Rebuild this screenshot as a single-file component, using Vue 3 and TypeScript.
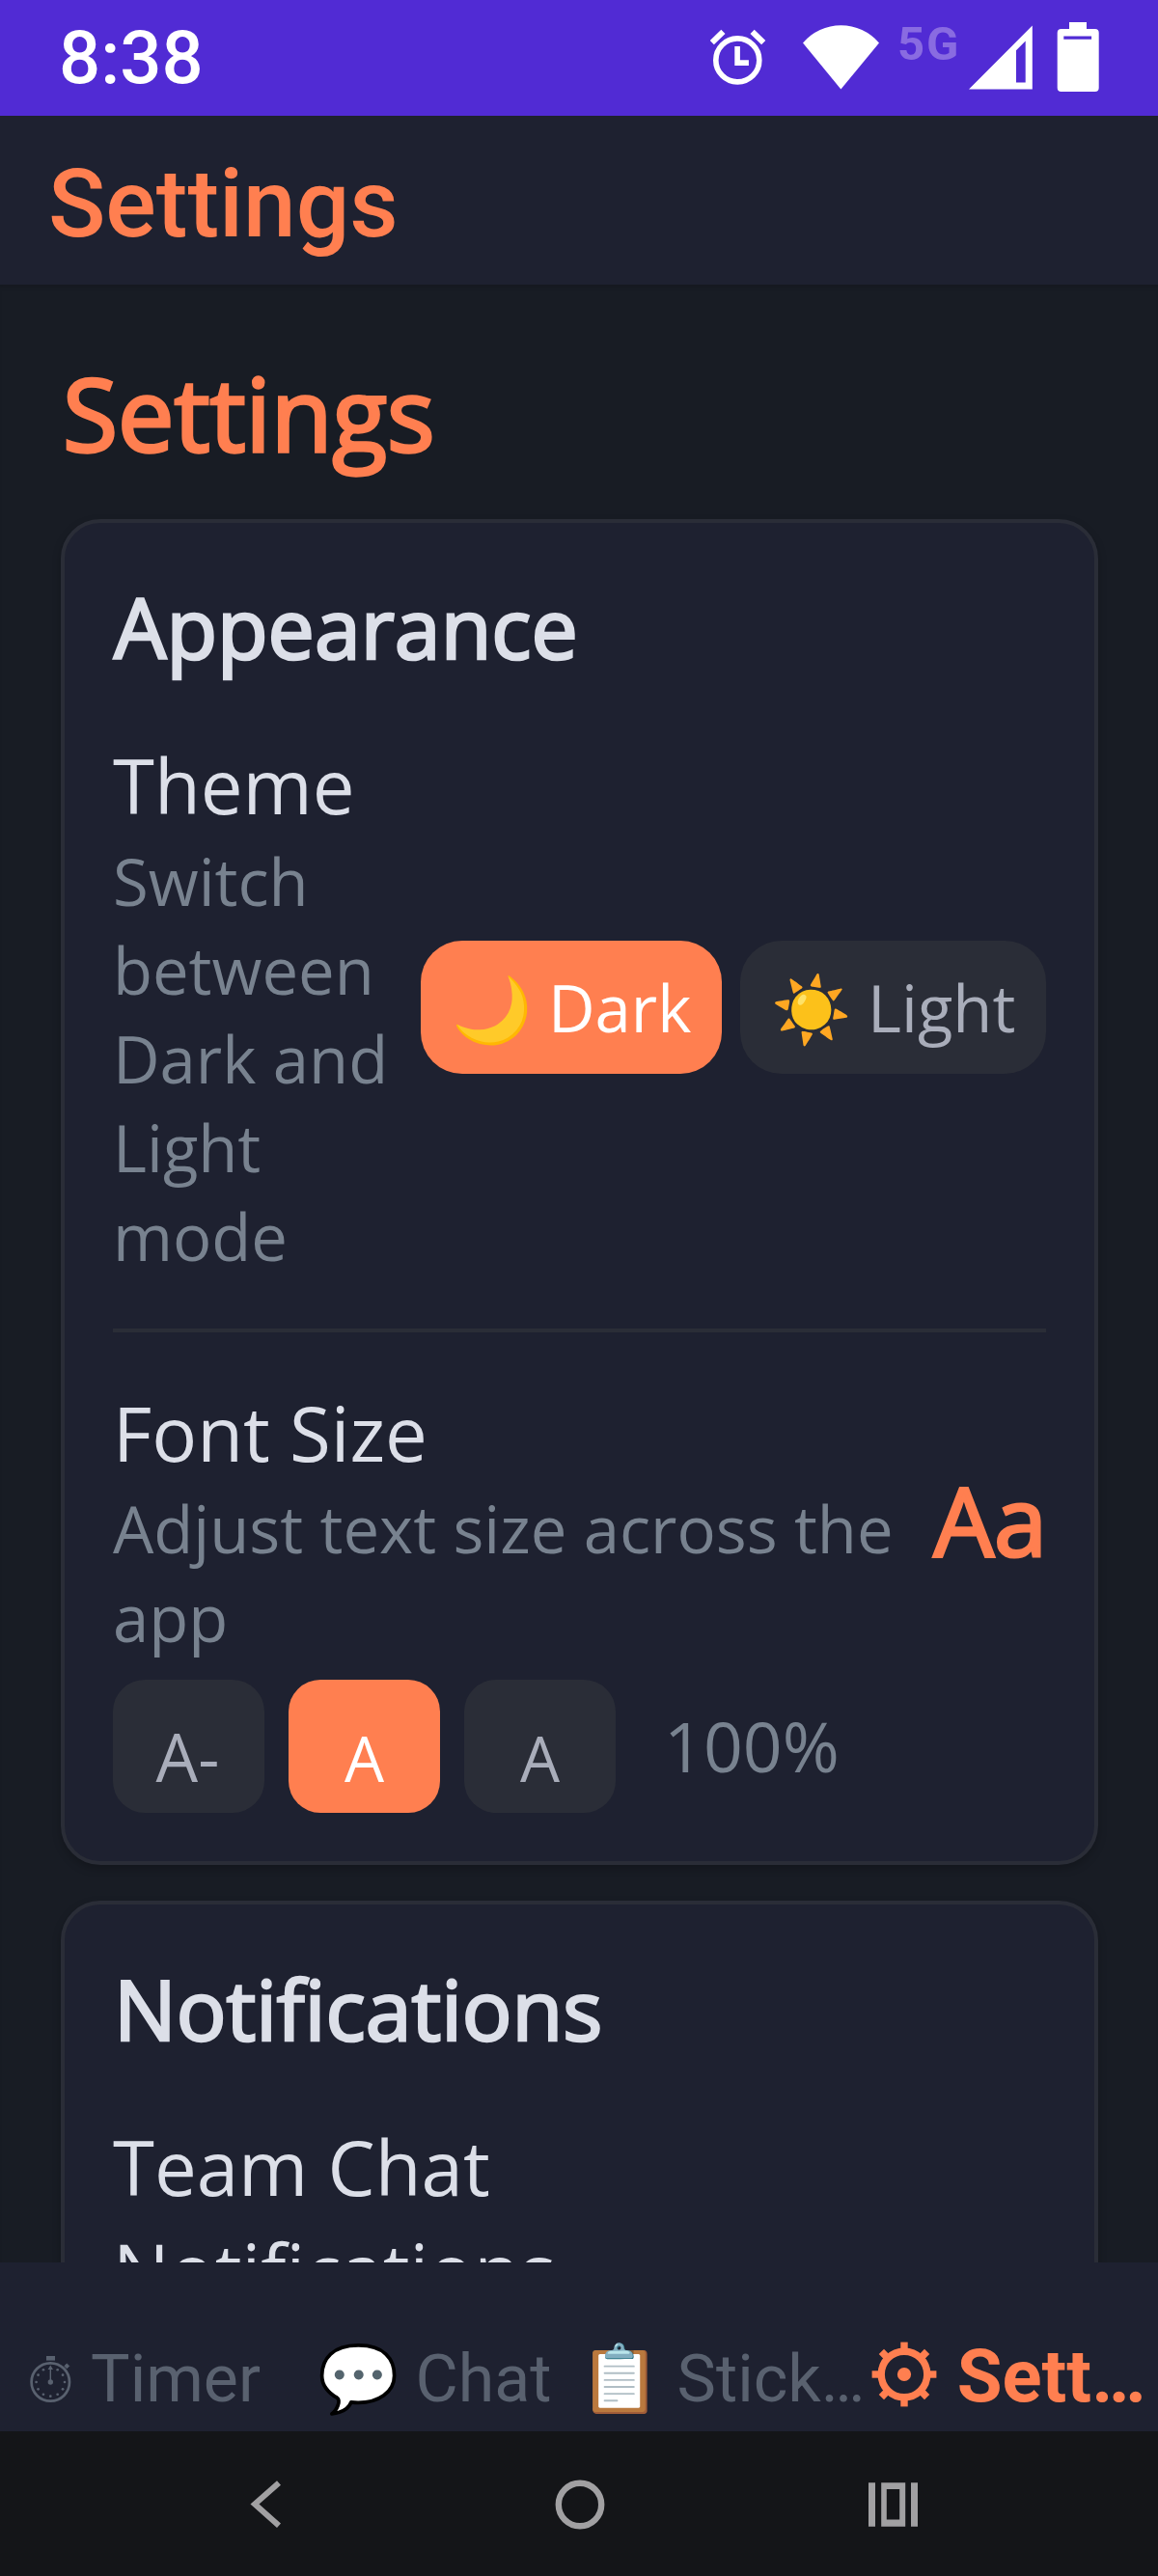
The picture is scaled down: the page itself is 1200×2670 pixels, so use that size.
<script setup lang="ts">
import { ref } from 'vue'

type Theme = 'dark' | 'light'

const theme = ref<Theme>('dark')
const themes: { id: Theme; label: string }[] = [
  { id: 'dark', label: '🌙 Dark' },
  { id: 'light', label: '☀️ Light' },
]

const fontStep = ref(1)
const fontSteps = ['A-', 'A', 'A']

const dialDots = Array.from({ length: 11 }, (_, i) => {
  const a = ((i + 1) * Math.PI) / 6
  return { x: 22.3 + 14.7 * Math.sin(a), y: 28 - 14.7 * Math.cos(a) }
})
const gearTeeth = Array.from({ length: 8 }, (_, i) => i * 45)
</script>

<template>
  <div class="screen">
    <div class="status">
      <span class="clock">8:38</span>
      <div class="indicators">
        <svg width="58" height="120" viewBox="736 0 58 120">
          <circle cx="764.3" cy="62.4" r="22.5" fill="none" stroke="#fff" stroke-width="5.6" />
          <path d="M761.3 48h5.6v14.3h9V68h-14.6z" fill="#fff" />
          <path d="M737.8 44.2L749.4 32.8M779.6 32.8L791.2 44.2" stroke="#fff" stroke-width="6" />
        </svg>
        <svg class="wifi" width="80" height="120" viewBox="831 0 80 120">
          <path d="M832 44.4A52 52 0 0 1 911 44.4L871.4 92.4z" fill="#fff" />
        </svg>
        <span class="net">5G</span>
        <svg class="signal" width="66" height="120" viewBox="1004 0 66 120">
          <path fill="#fff" fill-rule="evenodd" d="M1004 92.6h65.8V26.5zM1053 52.3l9.7-9.8v43.1h-9.7z" />
        </svg>
        <svg class="battery" width="44" height="120" viewBox="1095 0 44 120">
          <path fill="#fff" fill-rule="evenodd"
            d="M1108 23h18v7h8.7a4 4 0 0 1 4 4v57a4 4 0 0 1-4 4h-35a4 4 0 0 1-4-4V34a4 4 0 0 1 4-4h8.3zM1102.3 37.4v3.3h28.8v-3.3z" />
        </svg>
      </div>
    </div>

    <header class="appbar">Settings</header>

    <main class="content">
      <h1>Settings</h1>

      <section class="card">
        <h2>Appearance</h2>
        <div class="row">
          <div class="info">
            <div class="label">Theme</div>
            <div class="desc">Switch between Dark and Light mode</div>
          </div>
          <div class="themes">
            <button v-for="t in themes" :key="t.id" :class="['pill', t.id, { active: theme === t.id }]"
              @click="theme = t.id">{{ t.label }}</button>
          </div>
        </div>
        <div class="divider"></div>
        <div class="row">
          <div class="info">
            <div class="label">Font Size</div>
            <div class="desc">Adjust text size across the app</div>
          </div>
          <div class="sample">Aa</div>
        </div>
        <div class="steps">
          <button v-for="(s, i) in fontSteps" :key="i" :class="['step', { active: fontStep === i, small: i === 0 }]"
            @click="fontStep = i">{{ s }}</button>
          <span class="percent">100%</span>
        </div>
      </section>

      <section class="card">
        <h2>Notifications</h2>
        <div class="label narrow">Team Chat Notifications</div>
      </section>
    </main>

    <nav class="tabs">
      <div class="tab">
        <svg class="timer" width="46" height="50" viewBox="0 0 46 50" fill="currentColor">
          <circle cx="22.3" cy="28" r="19.7" fill="none" stroke="currentColor" stroke-width="2.7" />
          <rect x="18" y="1" width="9" height="4.6" />
          <path d="M39.3 9l2.4 2.4-2.4 2.4-2.4-2.4z" stroke="currentColor" />
          <circle v-for="(d, i) in dialDots" :key="i" :cx="d.x" :cy="d.y" r="1.35" />
          <circle cx="22.3" cy="28" r="2.7" />
          <path d="M21.6 28V15h-2l2.7-4.6 2.7 4.6h-2v13z" />
        </svg>
        <span>Timer</span>
      </div>
      <div class="tab"><span>💬 Chat</span></div>
      <div class="tab notes"><span>📋 Stick…</span></div>
      <div class="tab current">
        <svg class="gear" width="74" height="68" viewBox="-37 -34 74 68" fill="currentColor">
          <circle r="23.8" fill="none" stroke="currentColor" stroke-width="7.4" />
          <circle r="7.1" />
          <rect v-for="a in gearTeeth" :key="a" x="-3.7" y="-33.4" width="7.4" height="8" :transform="`rotate(${a})`" />
        </svg>
        <span>Sett…</span>
      </div>
    </nav>

    <div class="sysnav">
      <svg width="32" height="52" viewBox="259 2570 32 52">
        <path d="M289 2573.4L264 2595.6L289 2617.8" fill="none" stroke="#a1a0a2" stroke-width="6" />
      </svg>
      <svg class="home" width="52" height="52" viewBox="0 0 52 52">
        <circle cx="26" cy="26" r="22.2" fill="none" stroke="#a1a0a2" stroke-width="6.4" />
      </svg>
      <svg width="52" height="52" viewBox="0 0 52 52">
        <path fill="#a1a0a2" fill-rule="evenodd" d="M0 3.3h7v45.4H0zM44 3.3h7v45.4h-7zM13.2 3.3h25v45.4h-25zM18.8 10v31.4h13.4V10z" />
      </svg>
    </div>
  </div>
</template>

<style>
body {
  background: #181c24;
}
</style>

<style scoped>
.screen {
  width: 1200px;
  height: 2670px;
  display: flex;
  flex-direction: column;
  overflow: hidden;
  background: #181c24;
  font-family: "Open Sans", sans-serif;
  color: #dcdfe8;
}

.status {
  flex: none;
  height: 120px;
  box-sizing: border-box;
  padding: 0 61px;
  display: flex;
  justify-content: space-between;
  align-items: center;
  background: #512bd4;
  color: #fff;
  font-family: Roboto, sans-serif;
}

.clock {
  font-size: 76px;
  font-weight: 500;
  line-height: 90px;
}

.indicators {
  display: flex;
  height: 120px;
}

.wifi {
  margin-left: 37px;
}

.net {
  width: 62px;
  margin: 17px 0 0 19px;
  font-size: 49px;
  font-weight: 700;
  line-height: 58px;
  letter-spacing: 2px;
  color: #896be1;
}

.signal {
  margin-left: 12px;
}

.battery {
  margin-left: 25px;
}

.appbar {
  flex: none;
  height: 175px;
  box-sizing: border-box;
  padding: 8px 50px 0;
  display: flex;
  align-items: center;
  background: #1e2130;
  color: #ff7f50;
  font-family: Roboto, sans-serif;
  font-size: 98px;
  font-weight: 500;
}

.content {
  flex: none;
  height: 2050px;
  box-sizing: border-box;
  padding: 62px 62px 0 63px;
  overflow: hidden;
  box-shadow: inset 0 5px 5px -3px rgba(0, 0, 0, 0.15);
}

h1 {
  margin: 0 0 39px;
  padding-left: 2px;
  font-size: 104px;
  font-weight: 400;
  line-height: 142px;
  color: #ff7f50;
  -webkit-text-stroke: 3.3px #ff7f50;
}

.card {
  margin-bottom: 37px;
  padding: 50px;
  border: 4px solid #2a2d37;
  border-radius: 41px;
  background: #1e2130;
  box-shadow: 0 4px 10px rgba(0, 0, 0, 0.22);
}

h2 {
  margin: -1px 0 51px;
  padding-left: 1px;
  font-size: 86px;
  font-weight: 400;
  line-height: 118px;
  -webkit-text-stroke: 2.7px #dcdfe8;
}

.row {
  display: flex;
  align-items: center;
  justify-content: space-between;
}

.info {
  flex: 1;
  min-width: 0;
}

.label {
  padding-top: 1px;
  margin-bottom: -1px;
  font-size: 78px;
  line-height: 107px;
}

.narrow {
  width: 600px;
}

.desc {
  font-size: 67px;
  line-height: 92px;
  color: #78828f;
}

.themes {
  flex: none;
  display: flex;
  gap: 19px;
  margin-left: 31px;
}

button {
  padding: 0;
  border: 0;
  font-family: inherit;
  background: #2a2d37;
  color: #a9adba;
  white-space: nowrap;
}

button.active {
  background: #ff7f50;
  color: #fff;
}

.pill {
  width: 312px;
  height: 138px;
  border-radius: 43px;
  font-size: 67px;
  line-height: 138px;
}

.pill.light {
  width: 317px;
}

.divider {
  height: 4px;
  margin: 50px 0;
  background: #2a2d37;
}

.sample {
  flex: none;
  margin: -4px -1px 0 0;
  font-size: 99px;
  line-height: 136px;
  color: #ff7f50;
  -webkit-text-stroke: 3.1px #ff7f50;
}

.steps {
  display: flex;
  align-items: center;
  gap: 25px;
  margin-top: 19px;
}

.step {
  width: 157px;
  height: 138px;
  box-sizing: border-box;
  padding-top: 24px;
  border-radius: 33px;
  font-size: 65px;
  line-height: 114px;
}

.step.small {
  padding: 21px 2px 0 0;
  font-size: 69px;
  line-height: 117px;
}

.percent {
  margin-left: 25px;
  font-size: 71.5px;
  line-height: 98px;
  color: #78828f;
}

.tabs {
  flex: none;
  height: 175px;
  display: flex;
  background: #1e2130;
  color: #59616f;
  font-family: Roboto, sans-serif;
  font-size: 68px;
  line-height: 80px;
}

.tab {
  width: 300px;
  height: 80px;
  margin-top: 81px;
  display: flex;
  justify-content: center;
  white-space: nowrap;
}

.tab.notes {
  box-sizing: border-box;
  padding-right: 4px;
}

.tab.current {
  box-sizing: border-box;
  margin-top: 78px;
  padding-right: 13px;
  color: #ff7f50;
  font-size: 76px;
  font-weight: 700;
}

.timer {
  flex: none;
  margin: 15px 18px 0 0;
}

.gear {
  flex: none;
  margin: 4px 18px 0 0;
}

.sysnav {
  flex: none;
  height: 150px;
  box-sizing: border-box;
  padding: 2px 0 0 259px;
  display: flex;
  align-items: center;
  background: #141518;
}

.home {
  margin: 0 273px 0 284px;
}
</style>
